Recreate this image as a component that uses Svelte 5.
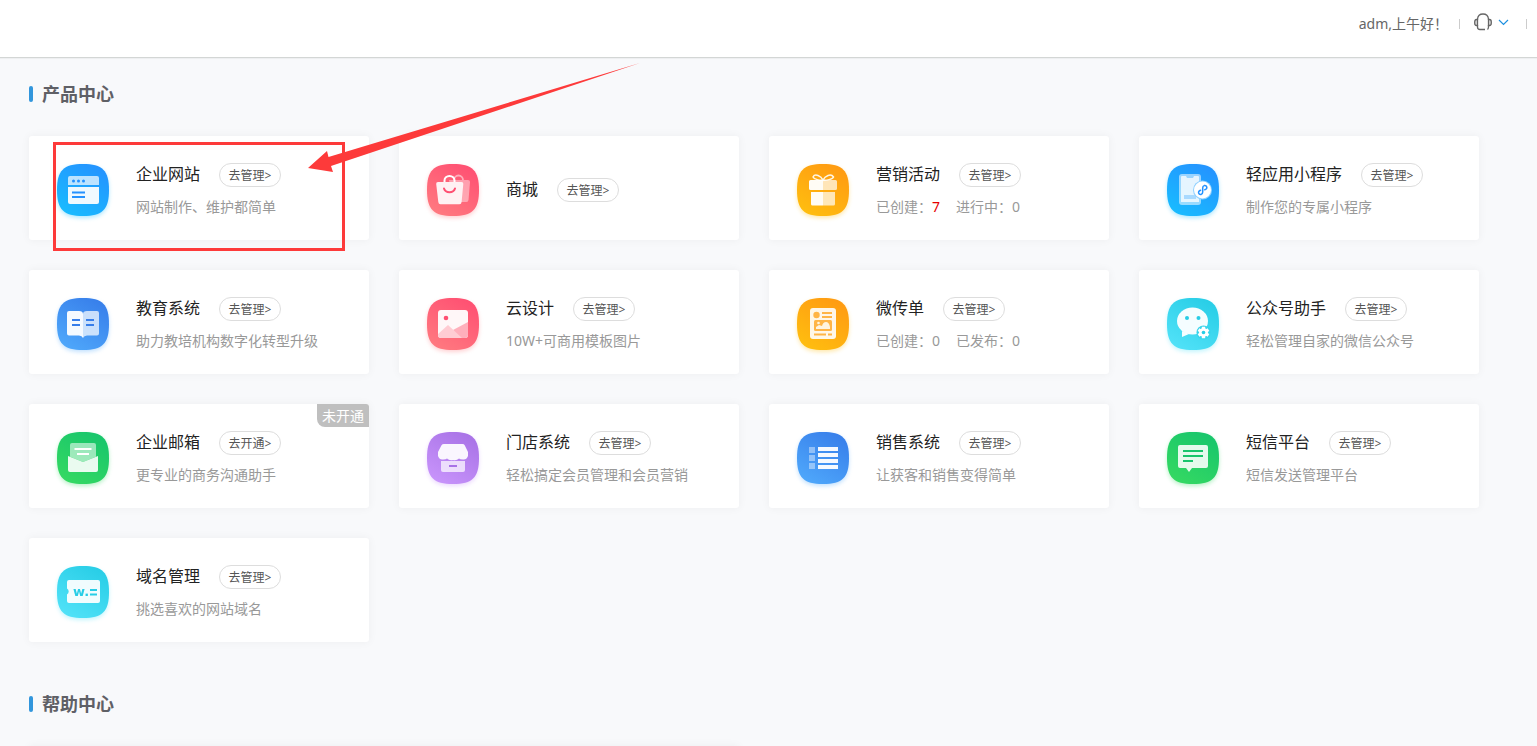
<script lang="ts">
	type Product = {
		icon: string
		tone: string
		name: string
		action?: string
		desc?: string
		counts?: { label: string; value: number; hot?: boolean }[]
		badge?: string
	}

	const tones: Record<string, [string, string]> = {
		sky: ['#2492ff', '#19bcff'],
		pink: ['#ff4f72', '#ff7a80'],
		orange: ['#ff9a12', '#ffbe0f'],
		blue: ['#377eea', '#4fa8fb'],
		cyan: ['#27cde6', '#52e2f8'],
		green: ['#17c56c', '#35d962'],
		purple: ['#a872e6', '#c894fb']
	}

	const products: Product[] = [
		{ icon: 'site', tone: 'sky', name: '企业网站', desc: '网站制作、维护都简单' },
		{ icon: 'mall', tone: 'pink', name: '商城' },
		{
			icon: 'gift',
			tone: 'orange',
			name: '营销活动',
			counts: [
				{ label: '已创建：', value: 7, hot: true },
				{ label: '进行中：', value: 0 }
			]
		},
		{ icon: 'mini', tone: 'sky', name: '轻应用小程序', desc: '制作您的专属小程序' },
		{ icon: 'book', tone: 'blue', name: '教育系统', desc: '助力教培机构数字化转型升级' },
		{ icon: 'image', tone: 'pink', name: '云设计', desc: '10W+可商用模板图片' },
		{
			icon: 'leaflet',
			tone: 'orange',
			name: '微传单',
			counts: [
				{ label: '已创建：', value: 0 },
				{ label: '已发布：', value: 0 }
			]
		},
		{ icon: 'wechat', tone: 'cyan', name: '公众号助手', desc: '轻松管理自家的微信公众号' },
		{
			icon: 'mail',
			tone: 'green',
			name: '企业邮箱',
			action: '去开通>',
			desc: '更专业的商务沟通助手',
			badge: '未开通'
		},
		{ icon: 'shop', tone: 'purple', name: '门店系统', desc: '轻松搞定会员管理和会员营销' },
		{ icon: 'list', tone: 'blue', name: '销售系统', desc: '让获客和销售变得简单' },
		{ icon: 'sms', tone: 'green', name: '短信平台', desc: '短信发送管理平台' },
		{ icon: 'domain', tone: 'cyan', name: '域名管理', desc: '挑选喜欢的网站域名' }
	]
</script>

{#snippet glyph(icon: string, tone: string)}
	{@const c = tones[tone][0]}
	{#if icon === 'site'}
		<path d="M13 12h27a2 2 0 0 1 2 2v7H11v-7a2 2 0 0 1 2-2z" opacity=".7" />
		<path d="M11 23h31v15a2 2 0 0 1-2 2H13a2 2 0 0 1-2-2z" opacity=".93" />
		<g fill={c}><circle cx="16.5" cy="17" r="1.5" /><circle cx="21.5" cy="17" r="1.5" /><circle cx="26.5" cy="17" r="1.5" /></g>
		<path d="M15 28.500h13M15 33h13" stroke={c} stroke-width="2" />
	{:else if icon === 'mall'}
		<path d="M22 16h19q2 0 2 2l-1.500 18q-.3 2-2 2H26z" opacity=".42" />
		<path d="M27 16a4.500 4.500 0 0 1 9 0" fill="none" stroke="#fff" stroke-width="1.800" opacity=".5" />
		<path d="M11 18h23.500q2 0 1.800 2l-1.700 18q-.2 2.200-2.200 2.200H13.500q-2 0-2.200-2.200L9.200 20q-.2-2 1.800-2z" fill="#fff1f3" />
		<path d="M17.500 18v-1.500a5 4.500 0 0 1 10 0V18" fill="none" stroke="#fff" stroke-width="2" />
		<path d="M17 24.500c1.500 5 9.500 5 11 0" fill="none" stroke={c} stroke-width="2" stroke-linecap="round" />
	{:else if icon === 'gift'}
		<path d="M26 16h12.500a1.500 1.500 0 0 1 1.500 1.500v7a1.500 1.500 0 0 1-1.500 1.500H26zM26 28h12v12a1.500 1.500 0 0 1-1.500 1.500H26z" opacity=".7" />
		<path d="M13.500 16H26v10H13.500a1.500 1.500 0 0 1-1.500-1.500v-7a1.500 1.500 0 0 1 1.500-1.500zM14 28h12v13.500H15.500A1.500 1.500 0 0 1 14 40z" opacity=".96" />
		<path d="M26 16c-3 .5-9-.5-10-3 2-4 8-1 10 3 2-4 8-7 10.500-3-1 2.500-7.500 3.500-10.500 3" fill="none" stroke="#fff" stroke-width="1.500" opacity=".9" />
	{:else if icon === 'mini'}
		<rect x="12" y="10" width="22" height="31" rx="3" opacity=".55" />
		<path d="M15 12h4l1 2h6l1-2h4q1 0 1 1v25H14V13q0-1 1-1z" opacity=".75" />
		<path d="M17 31h12v4H17z" fill="#a9daff" />
		<circle cx="35.500" cy="26" r="9.500" fill="#8fd0ff" />
		<circle cx="35.500" cy="26" r="8.500" />
		<path d="M33.600 26.200Q31.200 27 31.600 29q.6 1.800 2.600 1.400 1.500-.5 1.500-2.400v-4q0-2 1.500-2.400 2-.4 2.600 1.400.4 2-2 2.800" fill="none" stroke={c} stroke-width="1.500" stroke-linecap="round" />
	{:else if icon === 'book'}
		<path d="M12 13h10q4 0 4 3v24q-1-2.500-4-2.500H12a2 2 0 0 1-2-2V15a2 2 0 0 1 2-2z" opacity=".95" />
		<path d="M40 13H30q-4 0-4 3v24q1-2.500 4-2.500h10a2 2 0 0 0 2-2V15a2 2 0 0 0-2-2z" opacity=".72" />
		<path d="M15 22h8M15 27h8M29 22h8M29 27h8" stroke={c} stroke-width="2" />
	{:else if icon === 'image'}
		<rect x="11" y="12" width="30" height="28" rx="3" opacity=".95" />
		<circle cx="19" cy="20" r="2.300" fill={c} />
		<path d="M26 32 41 24v13q0 3-3 3h-7z" fill="#ffafbb" />
		<path d="M11 36 21 27l14 13H14q-3 0-3-3z" fill="#ffccd3" />
	{:else if icon === 'leaflet'}
		<rect x="13" y="10" width="26" height="31" rx="3" opacity=".9" />
		<circle cx="19.500" cy="17" r="3.200" fill="#ffb546" />
		<path d="M25 15h10M25 19h10M17 36.500h12M31 36.500h4" stroke="#ffb546" stroke-width="1.800" />
		<rect x="17" y="22" width="18" height="11" rx="1.500" fill="#ffb546" />
		<path d="M19 31v-2l3-2 3 1q1-4 4-4t4 5v2z" fill="#fff4df" /><circle cx="21.500" cy="25" r="1.300" fill="#fff4df" />
	{:else if icon === 'wechat'}
		<ellipse cx="25.500" cy="23" rx="15.500" ry="13.500" opacity=".95" />
		<path d="M15 33v6l7-3z" opacity=".95" />
		<circle cx="20" cy="20" r="2" fill={c} /><circle cx="31.500" cy="20" r="2" fill={c} />
		<circle cx="36.500" cy="34.500" r="7" fill="#36d4eb" />
		<path d="M36.500 28.700v11.600M31.500 31.600l10 5.800M31.500 37.400l10-5.800" stroke="#fff" stroke-width="3.400" />
		<circle cx="36.500" cy="34.500" r="4.400" /><circle cx="36.500" cy="34.500" r="1.800" fill={c} />
	{:else if icon === 'mail'}
		<path d="M15 11h22a2 2 0 0 1 2 2v11.800L26 30l-13-5.200V13a2 2 0 0 1 2-2z" opacity=".55" />
		<path d="M17.500 17h17M20 22h12" stroke="#fff" stroke-width="2" />
		<path d="m11 24 15 6 15-6v14a2 2 0 0 1-2 2H13a2 2 0 0 1-2-2z" opacity=".9" />
	{:else if icon === 'shop'}
		<path d="M14 29h24v9a2 2 0 0 1-2 2H16a2 2 0 0 1-2-2z" opacity=".72" />
		<path d="M17 12h18.500q1.500 0 2.200 1.300L41 20v4q-1.500 4-5 3.500-3 0-4-1-2.500 2.500-6 1.500-3.500 1-6-1.500-1 1-4 1-3.500.5-5-3.500v-4l3.500-6.700Q15.300 12 17 12z" opacity=".93" />
		<path d="M22 34h8" stroke={c} stroke-width="2" />
	{:else if icon === 'list'}
		<path d="M12 15h6v6h-6zM12 23h6v6h-6zM12 31h6v6h-6z" opacity=".42" />
		<path d="M21 15h20v4H21zM21 21h20v4H21zM21 27h20v4H21zM21 33h20v4H21z" opacity=".95" />
	{:else if icon === 'sms'}
		<path d="M13 13h26a2 2 0 0 1 2 2v19a2 2 0 0 1-2 2H25l-3 4-3-4h-6a2 2 0 0 1-2-2V15a2 2 0 0 1 2-2z" opacity=".88" />
		<path d="M16 19h20M16 24h20M16 29h10" stroke={c} stroke-width="2" />
	{:else}
		<path d="M12 14h29a2 2 0 0 1 2 2v19a2 2 0 0 1-2 2H12a2 2 0 0 1-2-2v-6.500a3.500 3.500 0 0 0 0-6V16a2 2 0 0 1 2-2z" opacity=".93" />
		<text x="16" y="30" class="domain-text" fill={c}>w.</text>
		<path d="M33 24h7M33 28.500h7" stroke={c} stroke-width="2.200" />
	{/if}
{/snippet}

<div class="page">
	<header>
		<span>adm,上午好！</span>
		<i class="divider"></i>
		<button class="service" aria-label="客服">
			<svg width="18" height="18" viewBox="0 0 18 18" fill="none" stroke="#666" stroke-width="1.300">
				<path d="M3.500 7V6Q4 1 9 1t5.500 5v1M3.500 12v2q0 2.500 2.500 2.500h5M14.500 12v2q0 1.500-1 2.500" />
				<path d="M3.500 6.500H2.500Q.7 6.500.7 9v1q0 2.500 1.800 2.500h1zM14.500 6.500h1q1.800 0 1.800 2.500v1q0 2.500-1.800 2.500h-1z" fill="#ddd" />
			</svg>
			<svg width="11" height="8" viewBox="0 0 11 8" fill="none" stroke="#1e90e0" stroke-width="1.200">
				<path d="m1 2 4.500 4.500L10 2" />
			</svg>
		</button>
		<i class="divider last"></i>
	</header>

	<main>
		<section>
			<h2>产品中心</h2>
			<div class="grid">
				{#each products as item}
					<article class="card">
						<svg class="icon" viewBox="0 0 52 52" style="--shade: {tones[item.tone][1]}" aria-hidden="true">
							<defs>
								<linearGradient id="bg-{item.icon}" x1=".8" y1="0" x2=".2" y2="1">
									<stop offset="0" stop-color={tones[item.tone][0]} />
									<stop offset="1" stop-color={tones[item.tone][1]} />
								</linearGradient>
							</defs>
							<path
								d="M26 0C45.500 0 52 6.500 52 26S45.500 52 26 52 0 45.500 0 26 6.500 0 26 0z"
								fill="url(#bg-{item.icon})"
							/>
							<g fill="#fff">{@render glyph(item.icon, item.tone)}</g>
						</svg>
						<div class="info">
							<div class="title">
								<h3>{item.name}</h3>
								<a href="#{item.icon}">{item.action ?? '去管理>'}</a>
							</div>
							{#if item.desc}
								<p>{item.desc}</p>
							{:else if item.counts}
								<p class="counts">
									{#each item.counts as count}
										<span>{count.label}<b class:hot={count.hot}>{count.value}</b></span>
									{/each}
								</p>
							{/if}
						</div>
						{#if item.badge}
							<span class="badge">{item.badge}</span>
						{/if}
					</article>
				{/each}

				<!-- hint: box round the first card's content, arrow pointing at it -->
				<svg class="hint" width="590" height="192" viewBox="0 0 590 192" aria-hidden="true">
					<rect x="1.500" y="81.500" width="289" height="106" fill="none" stroke="#fd3a3a" stroke-width="3" />
					<path d="M255 106 274 89l1.500 6L587 1 278 104l2 6z" fill="#fd3a3a" />
				</svg>
			</div>
		</section>

		<section>
			<h2>帮助中心</h2>
			<div class="grid">
				<article class="card wide"></article>
			</div>
		</section>
	</main>
</div>

<style>
	:global(body) {
		margin: 0;
	}
	.page {
		display: flex;
		flex-direction: column;
		height: 100vh;
		background: #f8f9fb;
		color: #666;
		font-family: 'Noto Sans', 'Noto Sans CJK SC', sans-serif;
		font-size: 14px;
		line-height: 20px;
	}
	header {
		display: flex;
		flex: none;
		align-items: center;
		justify-content: flex-end;
		padding: 14px 10px 23px 0;
		background: #fff;
		border-bottom: 1px solid #d3d6d5;
		box-shadow: 0 1px 1px rgba(0, 0, 0, 0.04);
	}
	.divider {
		width: 1px;
		height: 10px;
		margin: 0 14px 0 11px;
		background: #ccc;
	}
	.divider.last {
		margin: 0 0 0 17px;
	}
	.service {
		display: flex;
		align-items: center;
		gap: 6px;
		height: 20px;
		padding: 0 0 4px;
		border: 0;
		background: none;
		cursor: pointer;
	}
	main {
		flex: 1;
		min-height: 0;
		overflow-y: auto;
		scrollbar-width: none;
		padding: 24px 58px 0 29px;
	}
	section {
		margin-bottom: 50px;
	}
	h2 {
		display: flex;
		align-items: center;
		gap: 9px;
		margin: 0 0 30px;
		font-size: 18px;
		line-height: 24px;
		color: #5f6066;
	}
	h2::before {
		content: '';
		width: 4px;
		height: 16px;
		border-radius: 2px;
		background: #3296dc;
	}
	.grid {
		position: relative;
		display: grid;
		grid-template-columns: repeat(4, minmax(0, 1fr));
		gap: 30px;
	}
	.card {
		position: relative;
		display: flex;
		align-items: center;
		gap: 27px;
		min-height: 100px;
		padding: 4px 0 0 28px;
		background: #fff;
		border-radius: 3px;
		box-shadow: 0 0 10px rgba(0, 0, 0, 0.05);
	}
	.wide {
		grid-column: span 2;
	}
	.icon {
		flex: none;
		width: 52px;
		height: 52px;
		overflow: visible;
		filter: drop-shadow(0 2px 2px color-mix(in srgb, var(--shade) 35%, transparent));
	}
	.domain-text {
		font: bold 13px 'DejaVu Sans', sans-serif;
	}
	.title {
		display: flex;
		align-items: flex-start;
		gap: 19px;
	}
	h3 {
		margin: 0;
		font-size: 16px;
		font-weight: 400;
		line-height: 22px;
		color: #222;
	}
	.title a {
		box-sizing: border-box;
		min-width: 62px;
		padding: 2px 8px 0;
		border: 1px solid #ddd;
		border-radius: 12px;
		font-size: 12px;
		line-height: 20px;
		text-align: center;
		color: #555;
		text-decoration: none;
	}
	p {
		margin: 10px 0 0;
		color: #999;
	}
	.counts {
		display: flex;
		gap: 16px;
	}
	b {
		font-weight: 400;
	}
	.hot {
		color: #e60000;
	}
	.badge {
		position: absolute;
		top: 0;
		right: 0;
		padding: 2px 5px 1px;
		border-radius: 0 3px 0 8px;
		background: #bfbfbf;
		color: #fff;
	}
	.hint {
		position: absolute;
		left: 24px;
		top: -74px;
		pointer-events: none;
	}
</style>
